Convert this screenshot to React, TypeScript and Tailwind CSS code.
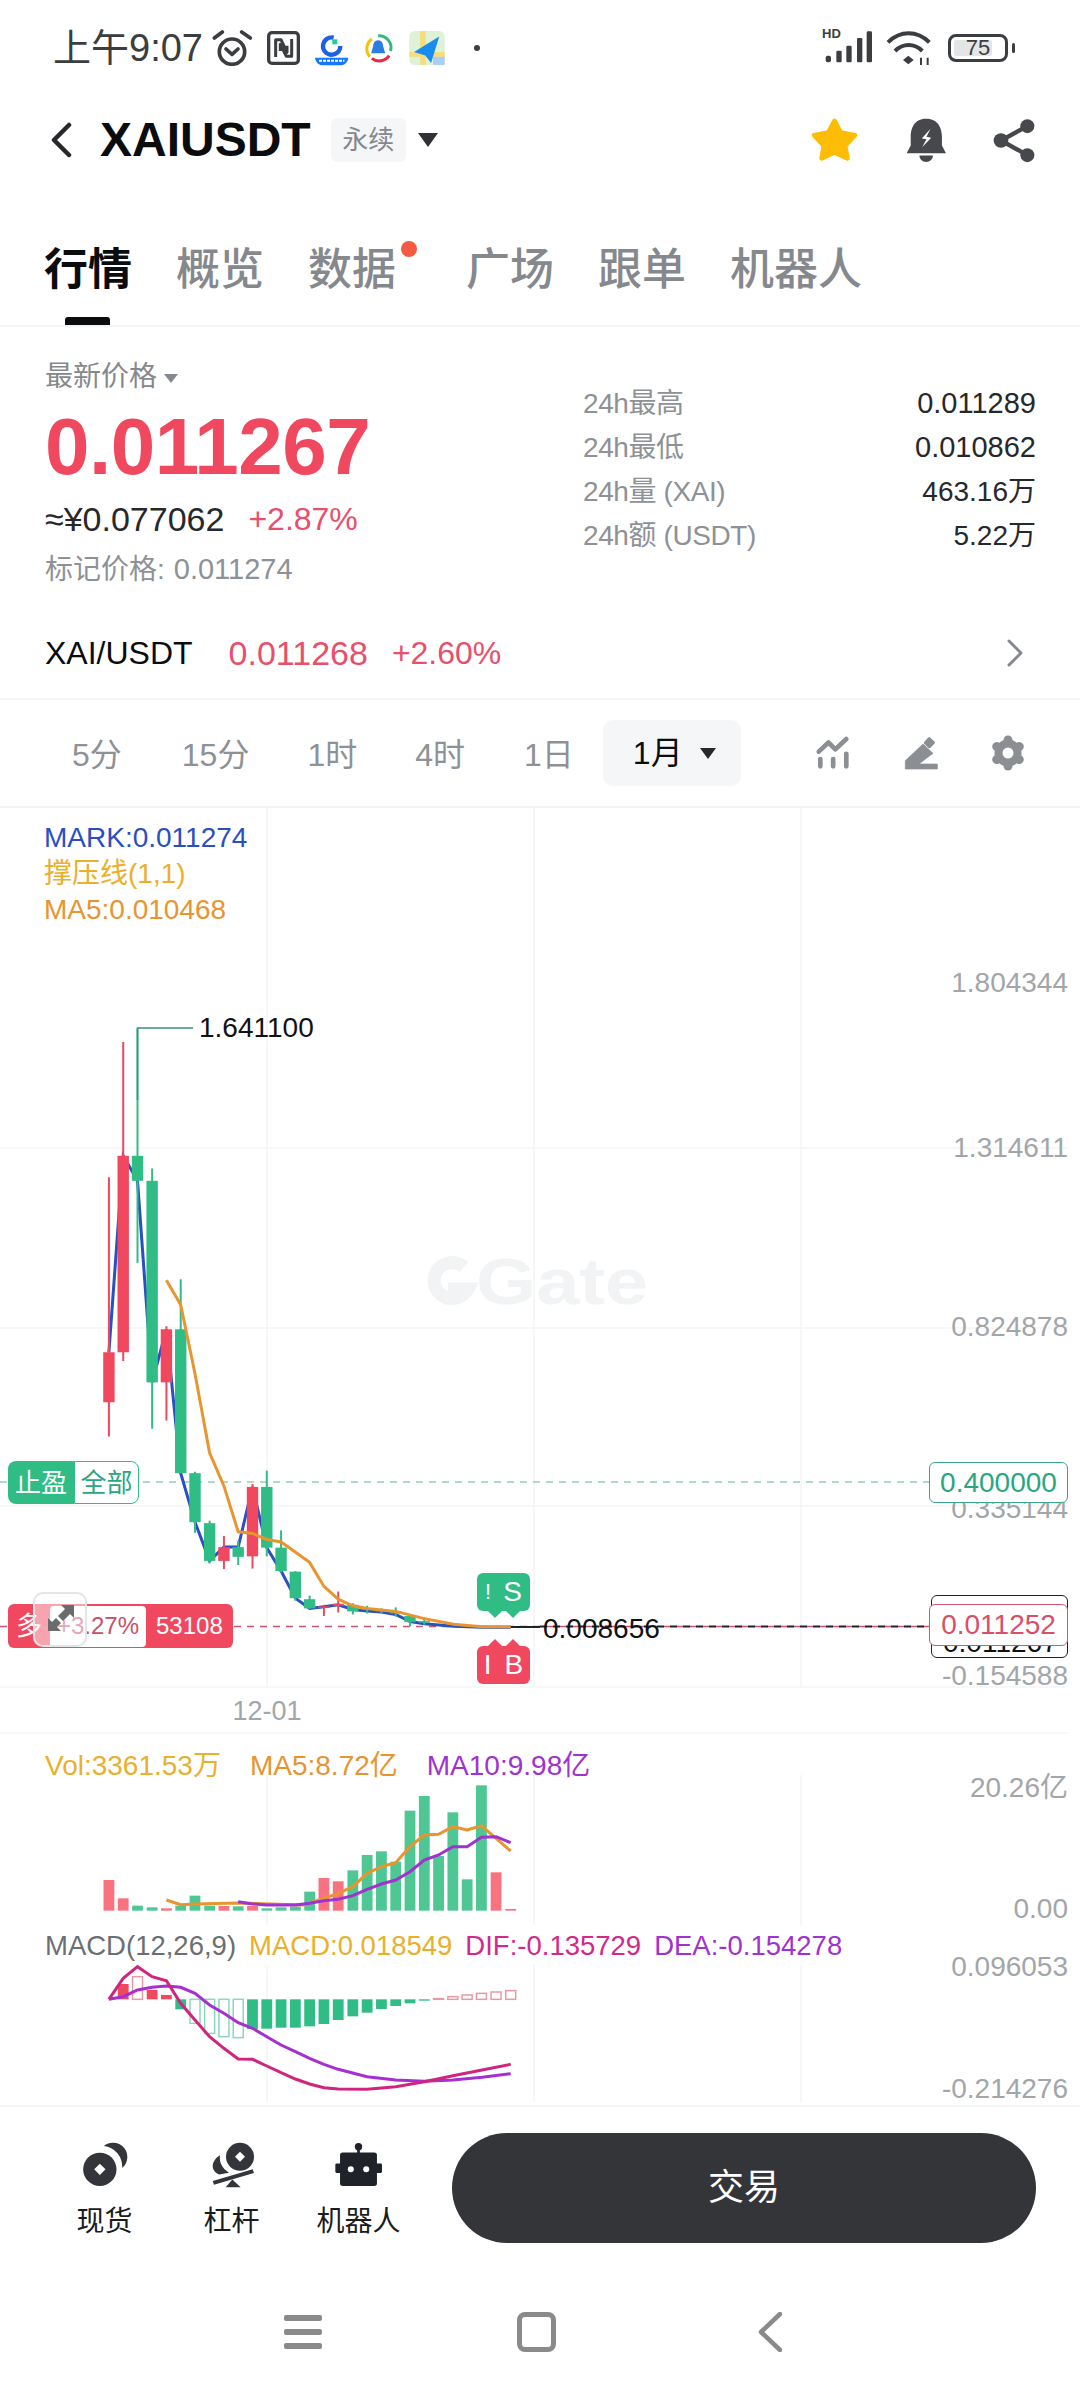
import React from 'react';

const RED = '#f0485f';
const GREEN = '#2fbd85';
const VOL_RED = '#f9727f';
const VOL_GREEN = '#4fc795';

// chart data is read off the reference: main panel and sub panels have their own scale
const X = (z: number) => z / 2.8;
const Y = (z: number) => 940 + z / 1.96;
const SY = (z: number) => 1730 + z / 3;

type Candle = [number, number, number, number, number, 'r' | 'g'];

const candles: Candle[] = [
    [305, 465, 973, 808, 906, 'r'],
    [345, 200, 825, 423, 808, 'r'],
    [385, 173, 633, 423, 472, 'g'],
    [426, 448, 958, 472, 867, 'g'],
    [466, 757, 942, 763, 867, 'r'],
    [506, 665, 1045, 763, 1045, 'g'],
    [546, 1042, 1162, 1045, 1141, 'g'],
    [587, 1138, 1222, 1143, 1217, 'g'],
    [627, 1168, 1233, 1190, 1217, 'r'],
    [667, 1178, 1225, 1190, 1209, 'g'],
    [707, 1066, 1232, 1072, 1208, 'r'],
    [747, 1040, 1208, 1072, 1191, 'g'],
    [787, 1157, 1240, 1191, 1237, 'g'],
    [827, 1237, 1295, 1238, 1290, 'g'],
    [867, 1285, 1311, 1292, 1310, 'g'],
    [907, 1303, 1325, 1306, 1309, 'r'],
    [947, 1277, 1318, 1301, 1305, 'r'],
    [988, 1300, 1322, 1303, 1316, 'g'],
    [1028, 1305, 1320, 1310, 1313, 'g'],
    [1068, 1310, 1320, 1312, 1316, 'g'],
    [1108, 1308, 1326, 1316, 1320, 'g'],
    [1148, 1322, 1345, 1325, 1337, 'g'],
    [1188, 1328, 1342, 1335, 1338, 'g'],
];

const markLine = [[305, 808], [345, 423], [385, 472], [426, 867], [466, 763], [506, 1045], [546, 1141], [587, 1217], [627, 1190], [667, 1190], [707, 1072], [747, 1191], [787, 1237], [827, 1290], [867, 1310], [907, 1307], [947, 1303], [988, 1312], [1028, 1315], [1068, 1317], [1108, 1322], [1148, 1336], [1188, 1340], [1270, 1345], [1350, 1347], [1430, 1347]];
const ma5Line = [[466, 667], [506, 715], [546, 850], [587, 1005], [627, 1070], [667, 1160], [707, 1163], [747, 1175], [787, 1180], [867, 1220], [907, 1267], [947, 1292], [988, 1305], [1028, 1310], [1108, 1316], [1188, 1330], [1270, 1341], [1350, 1346], [1430, 1346]];

const volBars: [number, number, 'r' | 'g'][] = [
    [305, 450, 'r'], [345, 505, 'r'], [385, 527, 'g'], [426, 532, 'g'], [466, 535, 'r'], [506, 527, 'g'], [546, 497, 'g'], [587, 527, 'g'],
    [627, 528, 'r'], [667, 529, 'g'], [707, 528, 'r'], [747, 535, 'g'], [787, 532, 'g'], [827, 530, 'g'], [867, 485, 'g'], [907, 444, 'r'],
    [947, 454, 'r'], [988, 421, 'g'], [1028, 375, 'g'], [1068, 364, 'g'], [1108, 395, 'g'], [1148, 242, 'g'], [1188, 198, 'g'], [1228, 378, 'g'],
    [1268, 247, 'g'], [1308, 448, 'g'], [1348, 166, 'g'], [1389, 427, 'r'], [1430, 537, 'r'],
];
const volMa5 = [[466, 510], [506, 524], [546, 522], [667, 519], [850, 525], [907, 505], [947, 490], [988, 470], [1028, 430], [1068, 410], [1108, 398], [1148, 350], [1188, 315], [1228, 313], [1268, 290], [1308, 300], [1348, 287], [1389, 325], [1430, 363]];
const volMa10 = [[667, 515], [707, 522], [747, 525], [827, 525], [867, 520], [907, 512], [947, 508], [988, 497], [1028, 478], [1068, 462], [1108, 450], [1148, 425], [1188, 390], [1228, 375], [1268, 350], [1308, 350], [1348, 322], [1389, 320], [1430, 338]];

// x, end of bar, filled
const macdBars: [number, number, boolean][] = [
    [345, 762, true], [385, 740, false], [426, 780, true], [466, 795, true], [506, 838, true], [546, 880, false], [587, 910, false], [627, 920, false],
    [667, 923, false], [707, 897, true], [747, 896, true], [787, 893, true], [827, 893, true], [867, 889, true], [907, 882, true], [947, 870, true],
    [988, 859, true], [1028, 848, true], [1068, 837, true], [1108, 828, true], [1148, 820, true], [1188, 812, true], [1228, 806, false], [1268, 800, false],
    [1308, 795, false], [1348, 790, false], [1389, 786, false], [1430, 782, false],
];
const difLine = [[305, 808], [345, 745], [385, 710], [426, 740], [466, 752], [506, 820], [546, 870], [587, 920], [627, 955], [667, 987], [707, 988], [747, 1008], [787, 1028], [827, 1047], [867, 1062], [907, 1073], [947, 1077], [1028, 1078], [1108, 1070], [1188, 1055], [1268, 1037], [1350, 1020], [1430, 1003]];
const deaLine = [[305, 808], [345, 800], [385, 780], [426, 772], [466, 768], [506, 772], [546, 790], [587, 825], [627, 850], [667, 878], [707, 895], [747, 920], [787, 945], [827, 965], [867, 985], [907, 1003], [947, 1018], [1028, 1040], [1108, 1050], [1188, 1054], [1268, 1050], [1350, 1042], [1430, 1031]];

const pts = (line: number[][], fy: (z: number) => number) => line.map(([x, y]) => `${X(x).toFixed(1)},${fy(y).toFixed(1)}`).join(' ');

const axisLabels: [string, number][] = [
    ['1.804344', 982], ['1.314611', 1147], ['0.824878', 1326], ['0.335144', 1508], ['-0.154588', 1675],
    ['20.26亿', 1787], ['0.00', 1908], ['0.096053', 1966], ['-0.214276', 2088],
];

const Chart = () => (
    <svg className="absolute inset-0" width={1080} height={1297} viewBox="0 808 1080 1297">
        {[267, 534, 801].map((x) => (
            <g key={x} stroke="#f3f4f5" strokeWidth={1.5}>
                <line x1={x} x2={x} y1={808} y2={1687} />
                <line x1={x} x2={x} y1={1775} y2={1925} />
                <line x1={x} x2={x} y1={1965} y2={2102} />
            </g>
        ))}
        {[1148, 1328, 1506, 1687, 1733].map((y) => (
            <line key={y} x1={0} x2={1068} y1={y} y2={y} stroke="#f3f4f5" strokeWidth={1.5} />
        ))}
        <line x1={0} x2={929} y1={1482} y2={1482} stroke="#5cb59c" strokeWidth={1.2} strokeDasharray="7 6" />
        <line x1={0} x2={929} y1={1626.5} y2={1626.5} stroke="#c9566e" strokeWidth={1.5} strokeDasharray="7 6" />
        <line x1={540} x2={931} y1={1626.5} y2={1626.5} stroke="#222" strokeWidth={2} strokeDasharray="7 6" />
        <line x1={480} x2={540} y1={1627} y2={1627} stroke="#222" strokeWidth={2} />

        {/* watermark */}
        <g fill="none" stroke="#f1f3f4" strokeWidth={13}>
            <path d="M464 1267 A18 18 0 1 0 468 1289 L448 1289" />
        </g>
        <text x={476} y={1304} fontSize={64} fontWeight={700} fill="#f1f3f4" textLength={172} lengthAdjust="spacingAndGlyphs">Gate</text>

        <polyline points={pts(markLine, Y)} fill="none" stroke="#2a4fc0" strokeWidth={3} />
        {candles.map(([x, wt, wb, bt, bb, c]) => {
            const col = c === 'r' ? RED : GREEN;
            return (
                <g key={x}>
                    <line x1={X(x)} x2={X(x)} y1={Y(wt)} y2={Y(wb)} stroke={col} strokeWidth={2} />
                    <rect x={X(x) - 5.7} y={Y(bt)} width={11.4} height={Math.max(Y(bb) - Y(bt), 1.5)} fill={col} />
                </g>
            );
        })}
        <polyline points={pts(ma5Line, Y)} fill="none" stroke="#e8952f" strokeWidth={3} />
        <polyline points={`137.5,1100 137.5,1028 193,1028`} fill="none" stroke="#3f8f77" strokeWidth={1.5} />
        <text x={199} y={1027} fontSize={28} fill="#111" dominantBaseline="central">1.641100</text>
        <text x={543} y={1628} fontSize={28} fill="#111" dominantBaseline="central">0.008656</text>
        <text x={267} y={1711} fontSize={27} fill="#a3a6a9" textAnchor="middle" dominantBaseline="central">12-01</text>

        {volBars.map(([x, top, c]) => (
            <rect key={x} x={X(x) - 5.4} y={SY(top)} width={10.8} height={SY(542) - SY(top)} fill={c === 'r' ? VOL_RED : VOL_GREEN} />
        ))}
        <polyline points={pts(volMa5, SY)} fill="none" stroke="#e8952f" strokeWidth={3} />
        <polyline points={pts(volMa10, SY)} fill="none" stroke="#a032d0" strokeWidth={3} />

        {macdBars.map(([x, end, filled]) => {
            const zero = SY(808);
            const e = SY(end);
            const col = end < 808 ? RED : GREEN;
            const y = Math.min(zero, e);
            const h = Math.abs(e - zero);
            return filled ? (
                <rect key={x} x={X(x) - 5.4} y={y} width={10.8} height={h} fill={col} />
            ) : (
                <rect key={x} x={X(x) - 5} y={y} width={10} height={h} fill="#fff" stroke={end < 808 ? '#e79aa6' : '#8ed6bb'} strokeWidth={1.5} />
            );
        })}
        <polyline points={pts(deaLine, SY)} fill="none" stroke="#a52fd0" strokeWidth={3} />
        <polyline points={pts(difLine, SY)} fill="none" stroke="#d0257f" strokeWidth={3} />

        {axisLabels.map(([t, y]) => (
            <text key={t} x={1068} y={y} fontSize={28} fill="#a3a6a9" textAnchor="end" dominantBaseline="central">{t}</text>
        ))}
    </svg>
);

const StatusIcons = () => (
    <div className="flex items-center ml-[9px] gap-[15px]">
        <svg width={40} height={36} viewBox="30 32 120 108" fill="none" stroke="#3b3d40" strokeWidth={11}>
            <circle cx={90} cy={97} r={38} />
            <path d="M37 56 L61 38 M119 38 L145 56" strokeLinecap="round" />
            <path d="M72 89 L90 105 L108 89" strokeLinecap="round" strokeLinejoin="round" />
        </svg>
        <svg width={33} height={34} viewBox="198 36 99 102" fill="none" stroke="#3b3d40">
            <rect x={203} y={41} width={89} height={92} rx={10} strokeWidth={10} />
            <path d="M224 114 V62 H240 L258 100 V80" strokeWidth={9} strokeLinejoin="round" />
            <path d="M272 60 V112 H256 L238 76 V96" strokeWidth={9} strokeLinejoin="round" />
        </svg>
        <svg width={34} height={36} viewBox="350 32 102 108" fill="none">
            <path d="M406 55 A26 26 0 1 0 426 80" stroke="#1d62e0" strokeWidth={13} />
            <rect x={402} y={60} width={15} height={15} fill="#21c9a5" />
            <path d="M350 115 H450 C448 130 438 138 425 138 H375 C362 138 352 130 350 115Z" fill="#1677ff" />
            <path d="M362 124 H438" stroke="#fff" strokeWidth={6} strokeDasharray="9 3" />
        </svg>
        <svg width={30} height={34} viewBox="505 38 85 102" fill="none">
            <path d="M520 115 A36 36 0 0 1 526 62" stroke="#f2c30d" strokeWidth={9} />
            <path d="M545 52 A36 36 0 0 1 582 98" stroke="#32b97c" strokeWidth={9} />
            <path d="M578 112 A36 36 0 0 1 526 120" stroke="#e5294a" strokeWidth={9} />
            <path d="M545 66 C556 66 560 76 560 84 L566 105 H524 L530 84 C530 76 534 66 545 66Z" fill="#2a7de1" />
        </svg>
        <svg width={36} height={34} viewBox="648 38 104 100">
            <rect x={648} y={38} width={104} height={100} rx={16} fill="#dff1d6" />
            <rect x={680} y={38} width={16} height={100} fill="#f7dc7a" />
            <rect x={648} y={100} width={104} height={14} fill="#f7dc7a" />
            <rect x={718} y={114} width={34} height={24} fill="#a9cdf5" />
            <path d="M736 54 L662 100 L695 110 L712 132 Z" fill="#1a8cf0" />
        </svg>
        <div className="w-[6px] h-[6px] rounded-full bg-[#3b3d40] ml-[14px]" />
    </div>
);

const StatusBar = () => (
    <div className="h-[95px] flex items-center justify-between pl-[53px] pr-[65px] text-[#3b3d40]">
        <div className="flex items-center">
            <span className="text-[38px] leading-none">上午9:07</span>
            <StatusIcons />
        </div>
        <div className="flex items-center">
            <div className="relative w-[50px] h-[38px]">
                <span className="absolute left-[-2px] top-[-2px] text-[13px] font-bold leading-none">HD</span>
                <svg className="absolute inset-0" width={50} height={38} viewBox="40 35 150 114" fill="#3b3d40">
                    <rect x={45} y={115} width={16} height={20} rx={6} />
                    <rect x={77} y={100} width={16} height={35} rx={4} />
                    <rect x={107} y={85} width={16} height={50} rx={4} />
                    <rect x={139} y={62} width={16} height={73} rx={4} />
                    <rect x={168} y={42} width={16} height={93} rx={4} />
                </svg>
            </div>
            <svg className="ml-[12px]" width={46} height={36} viewBox="225 35 138 108" fill="none" stroke="#3b3d40" strokeWidth={12}>
                <path d="M231 72 C268 36 318 36 355 72" />
                <path d="M252 98 C276 74 310 74 334 98" />
                <path d="M292 112 L308 125 L292 138 L276 125Z" fill="#3b3d40" stroke="none" />
                <path d="M330 118 V140 M350 118 V140" strokeWidth={6} />
            </svg>
            <div className="flex items-center ml-[16px]">
                <div className="relative w-[60px] h-[28px] border-[3px] border-[#3b3d40] rounded-[8px] flex items-center justify-center">
                    <div className="absolute left-[3px] top-[3px] bottom-[3px] w-[38px] bg-[#e4e5e6] rounded-[2px]" />
                    <span className="relative text-[22px] leading-none">75</span>
                </div>
                <div className="w-[3px] h-[10px] bg-[#3b3d40] rounded-[2px] ml-[4px]" />
            </div>
        </div>
    </div>
);

const Header = () => (
    <div className="h-[90px] flex items-center pl-[50px] pr-[43px]">
        <svg width={22} height={36} viewBox="0 0 22 36" fill="none" stroke="#26282b" strokeWidth={4.5} strokeLinecap="round" strokeLinejoin="round">
            <path d="M19 3 L4 18 L19 33" />
        </svg>
        <span className="ml-[28px] text-[48px] font-bold leading-none text-[#0b0c0e]">XAIUSDT</span>
        <span className="ml-[20px] w-[75px] h-[44px] flex items-center justify-center rounded-[6px] bg-[#f5f6f7] text-[26px] text-[#85888c]">永续</span>
        <span className="ml-[12px] w-0 h-0 border-x-[10px] border-x-transparent border-t-[14px] border-t-[#2f3134]" />
        <div className="ml-auto flex items-center gap-[44px]">
            <svg width={52} height={48} viewBox="60 20 155 145">
                <path d="M136 35 L155 70 L198 78 L168 110 L175 148 L136 130 L97 148 L104 110 L74 78 L117 70 Z" fill="#fdbc05" stroke="#fdbc05" strokeWidth={14} strokeLinejoin="round" />
            </svg>
            <svg width={43} height={47} viewBox="340 20 128 140" fill="#46484c">
                <path d="M403 25 C440 25 450 55 450 80 V105 L462 128 H345 L357 105 V80 C357 55 366 25 403 25Z" />
                <path d="M383 135 H423 C423 160 383 160 383 135Z" />
                <path d="M416 55 L390 84 L404 86 L391 110 L418 82 L404 79 Z" fill="#fff" />
            </svg>
            <svg width={45} height={47} viewBox="605 20 135 140" fill="#46484c">
                <path d="M711 47 L632 90 L711 134" fill="none" stroke="#46484c" strokeWidth={13} />
                <circle cx={711} cy={47} r={21} />
                <circle cx={632} cy={90} r={22} />
                <circle cx={711} cy={134} r={21} />
            </svg>
        </div>
    </div>
);

const Tabs = () => (
    <div className="relative h-[142px] pl-[44px] flex items-center gap-[44px] pt-[30px] border-b-2 border-[#f3f4f5] text-[44px] font-medium leading-none text-[#85888c]">
        <span className="text-[#0b0c0e] font-bold">行情</span>
        <span>概览</span>
        <span className="relative mr-[26px]">
            数据
            <span className="absolute right-[-21px] top-[-7px] w-[16px] h-[16px] rounded-full bg-[#f25a43]" />
        </span>
        <span>广场</span>
        <span>跟单</span>
        <span>机器人</span>
        <div className="absolute left-[65px] bottom-0 w-[45px] h-[8px] rounded-t-[3px] bg-[#0b0c0e]" />
    </div>
);

const PriceStats = () => (
    <div className="w-[453px] pt-[55px] ml-auto mr-[44px]">
        {[
            ['24h最高', '0.011289', 'text-[29px]'],
            ['24h最低', '0.010862', 'text-[29px]'],
            ['24h量 (XAI)', '463.16万', 'text-[28px]'],
            ['24h额 (USDT)', '5.22万', 'text-[28px]'],
        ].map(([k, v, size]) => (
            <div key={k} className="h-[44px] flex items-center justify-between">
                <span className="text-[28px] tracking-[-0.4px] text-[#8e9195]">{k}</span>
                <span className={`${size} text-[#26282b]`}>{v}</span>
            </div>
        ))}
    </div>
);

const PriceBlock = () => (
    <div className="h-[283px] flex">
        <div className="pl-[45px] pt-[32px]">
            <div className="h-[36px] flex items-center text-[28px] text-[#85888c]">
                最新价格
                <span className="ml-[7px] mt-[2px] w-0 h-0 border-x-[7px] border-x-transparent border-t-[9px] border-t-[#85888c]" />
            </div>
            <div className="mt-[12px] h-[80px] flex items-center text-[80px] font-bold tracking-[-0.5px] text-[#f0485f]">0.011267</div>
            <div className="mt-[12px] h-[40px] flex items-center">
                <span className="text-[34px] text-[#26282b]">≈¥0.077062</span>
                <span className="ml-[24px] text-[32px] text-[#e84f6c]">+2.87%</span>
            </div>
            <div className="mt-[13px] h-[36px] flex items-center text-[28px] text-[#8e9195]">
                标记价格:<span className="ml-[9px] text-[29px]">0.011274</span>
            </div>
        </div>
        <PriceStats />
    </div>
);

const PairRow = () => (
    <div className="h-[90px] pb-[2px] flex items-center pl-[45px] pr-[56px] border-b-2 border-[#f3f4f5] text-[32px]">
        <span className="text-[#0b0c0e]">XAI/USDT</span>
        <span className="ml-[36px] text-[34px] text-[#e84f6c]">0.011268</span>
        <span className="ml-[24px] text-[#e84f6c]">+2.60%</span>
        <svg className="ml-auto" width={18} height={28} viewBox="0 0 18 28" fill="none" stroke="#85888c" strokeWidth={3} strokeLinecap="round" strokeLinejoin="round">
            <path d="M3 2 L15 14 L3 26" />
        </svg>
    </div>
);

const gearBumps = [0, 60, 120, 180, 240, 300];

const Timeframes = () => (
    <div className="h-[108px] flex items-center pl-[72px] pr-[55px] gap-[58px] border-b-2 border-[#f3f4f5] text-[32px] text-[#8e9195]">
        <span className="mr-[2px] pt-[3px]">5分</span>
        <span className="pt-[3px]">15分</span>
        <span className="pt-[3px]">1时</span>
        <span className="pt-[3px]">4时</span>
        <span className="pt-[3px] ml-[1px]">1日</span>
        <div className="ml-[-29px] w-[138px] h-[66px] rounded-[10px] bg-[#f5f6f7] flex items-center pl-[30px] text-[#0b0c0e]">
            1月
            <span className="ml-[17px] w-0 h-0 border-x-[8px] border-x-transparent border-t-[11px] border-t-[#26282b]" />
        </div>
        <div className="ml-auto flex items-center gap-[52px]">
            <svg width={36} height={36} viewBox="100 105 115 115" fill="none" stroke="#8b8e92" strokeWidth={15} strokeLinecap="round" strokeLinejoin="round">
                <path d="M112 158 L143 129 L165 151 L200 118" />
                <path d="M117 182 V205 M158 182 V205 M200 165 V205" />
            </svg>
            <svg width={36} height={36} viewBox="365 108 108 108" fill="#8b8e92">
                <path d="M372 185 L425 135 L455 163 L413 195 H468 V210 H372 Z" stroke="#8b8e92" strokeWidth={2} strokeLinejoin="round" />
                <rect x={431} y={118} width={26} height={26} rx={4} transform="rotate(43 444 131)" />
            </svg>
            <svg width={34} height={36} viewBox="0 0 34 36" fill="#8b8e92">
                <circle cx={17} cy={18} r={13.5} />
                {gearBumps.map((a) => (
                    <circle key={a} cx={17} cy={18 - 13} r={4.5} transform={`rotate(${a} 17 18)`} />
                ))}
                <circle cx={17} cy={18} r={5.5} fill="#fff" />
            </svg>
        </div>
    </div>
);

const TradeTags = () => (
    <>
        {/* take profit */}
        <div className="absolute left-[8px] top-[653px] w-[131px] h-[43px] flex text-[26px] leading-none">
            <div className="w-[66px] rounded-l-[8px] bg-[#2fbd85] text-white flex items-center justify-center">止盈</div>
            <div className="flex-1 rounded-r-[8px] border border-[#2fbd85] bg-white text-[#2aa680] flex items-center justify-center">全部</div>
        </div>
        {/* position */}
        <div className="absolute left-[8px] top-[796px] w-[225px] h-[44px] rounded-[6px] bg-[#f0485f] flex items-center text-[24px] leading-none text-white">
            <span className="w-[42px] text-center text-[26px]">多</span>
            <div className="w-[96px] h-[41px] rounded-[4px] bg-white text-[#c94f68] flex items-center justify-center">+3.27%</div>
            <span className="ml-[10px]">53108</span>
        </div>
        <div className="absolute left-[33px] top-[784px] w-[54px] h-[55px] rounded-[10px] border-2 border-[#e4e5e6] bg-white/50">
            <svg className="absolute left-[12px] top-[10px]" width={28} height={28} viewBox="0 0 28 28" fill="#6a6b6c">
                <path d="M27 1 H14 L18 5 L11 12 L16 17 L23 10 L27 14 Z" />
                <path d="M1 27 V14 L5 18 L9 14 L14 19 L10 23 L14 27 Z" />
            </svg>
        </div>
        {/* order marks */}
        <div className="absolute left-[477px] top-[765px] w-[53px] h-[38px] rounded-[6px] bg-[#2fbd85] flex items-center justify-center gap-[12px] text-[28px] leading-none text-white">
            <span className="text-[22px]">!</span>
            <span>S</span>
            <span className="absolute left-[13px] bottom-[-5px] w-[10px] h-[10px] rotate-45 bg-[#2fbd85]" />
            <span className="absolute left-[31px] bottom-[-5px] w-[10px] h-[10px] rotate-45 bg-[#2fbd85]" />
        </div>
        <div className="absolute left-[477px] top-[838px] w-[53px] h-[38px] rounded-[6px] bg-[#f0485f] flex items-center justify-center gap-[13px] text-[28px] leading-none text-white">
            <span className="font-light">I</span>
            <span>B</span>
            <span className="absolute left-[13px] top-[-5px] w-[10px] h-[10px] rotate-45 bg-[#f0485f]" />
            <span className="absolute left-[31px] top-[-5px] w-[10px] h-[10px] rotate-45 bg-[#f0485f]" />
        </div>
        {/* price boxes on the axis */}
        <div className="absolute left-[929px] top-[654px] w-[139px] h-[41px] rounded-[6px] border border-[#3aa886] bg-white text-[28px] leading-none text-[#2aa680] flex items-center justify-center">0.400000</div>
        <div className="absolute left-[931px] top-[787px] w-[137px] h-[63px] rounded-[6px] border border-[#222] bg-white overflow-hidden">
            <span className="absolute left-[11px] top-[33px] text-[28px] leading-none text-[#111]">0.011267</span>
        </div>
        <div className="absolute left-[929px] top-[796px] w-[139px] h-[42px] rounded-[6px] border border-[#d8566f] bg-white text-[28px] leading-none text-[#d94f6a] flex items-center justify-center">0.011252</div>
    </>
);

const ChartPanel = () => (
    <div className="relative h-[1297px] text-[28px] leading-[36px]">
        <Chart />
        <div className="relative pl-[44px] pt-[12px]">
            <div className="text-[#2a4fc0]">MARK:0.011274</div>
            <div className="text-[#eab02b]">撑压线(1,1)</div>
            <div className="text-[#e8952f]">MA5:0.010468</div>
        </div>
        <div className="absolute left-[45px] top-[940px] flex gap-[29px]">
            <span className="text-[#eab02b]">Vol:3361.53万</span>
            <span className="text-[#e8952f]">MA5:8.72亿</span>
            <span className="text-[#a032d0]">MA10:9.98亿</span>
        </div>
        <div className="absolute left-[45px] top-[1120px] flex gap-[13px] text-[27.5px]">
            <span className="text-[#6b6f73]">MACD(12,26,9)</span>
            <span className="text-[#eab02b]">MACD:0.018549</span>
            <span className="text-[#cf2a8c]">DIF:-0.135729</span>
            <span className="text-[#a032d0]">DEA:-0.154278</span>
        </div>
        <TradeTags />
    </div>
);

const BottomAction = ({ label, children }: { label: string; children: React.ReactNode }) => (
    <div className="w-[127px] flex flex-col items-center">
        <div className="h-[50px] flex items-center justify-center">{children}</div>
        <span className="mt-[19px] text-[28px] leading-none text-[#1a1b1d]">{label}</span>
    </div>
);

const BottomBar = () => (
    <div className="h-[165px] flex items-start border-t-2 border-[#f3f4f5] pl-[41px] pr-[44px]">
        <div className="flex pt-[32px]">
            <BottomAction label="现货">
                <svg width={46} height={45} viewBox="65 30 137 135" fill="#33353a">
                    <path d="M130 42 A42 42 0 0 1 185 108 A62 62 0 0 0 130 42Z" />
                    <circle cx={118} cy={112} r={50} />
                    <path d="M118 95 L135 112 L118 129 L101 112Z" fill="#fff" />
                </svg>
            </BottomAction>
            <BottomAction label="杠杆">
                <svg width={46} height={47} viewBox="445 30 138 140" fill="#33353a">
                    <circle cx={538} cy={77} r={42} />
                    <path d="M538 62 L553 77 L538 92 L523 77Z" fill="#fff" />
                    <path d="M478 72 C455 85 445 115 475 130 L505 125 C485 110 475 95 478 72Z" />
                    <path d="M458 155 L578 120" stroke="#33353a" strokeWidth={12} />
                    <path d="M515 145 L540 168 H495Z" />
                </svg>
            </BottomAction>
            <BottomAction label="机器人">
                <svg width={49} height={45} viewBox="822 26 146 134" fill="#1f2229">
                    <circle cx={895} cy={40} r={11} />
                    <rect x={891} y={40} width={8} height={20} />
                    <rect x={840} y={57} width={110} height={100} rx={8} />
                    <rect x={826} y={90} width={139} height={28} rx={4} />
                    <circle cx={872} cy={107} r={9} fill="#fff" />
                    <circle cx={918} cy={107} r={9} fill="#fff" />
                </svg>
            </BottomAction>
        </div>
        <button className="ml-auto mt-[26px] w-[584px] h-[110px] rounded-[55px] bg-[#333538] text-[36px] text-white">交易</button>
    </div>
);

const NavBar = () => (
    <div className="relative h-[130px] flex items-start pt-[42px] pl-[284px]">
        <div className="w-[38px] h-[40px] flex flex-col justify-between py-[3px]">
            <div className="h-[6px] rounded-[2px] bg-[#8a8a8a]" />
            <div className="h-[6px] rounded-[2px] bg-[#8a8a8a]" />
            <div className="h-[6px] rounded-[2px] bg-[#8a8a8a]" />
        </div>
        <div className="ml-[195px] w-[39px] h-[40px] rounded-[8px] border-[5px] border-[#8a8a8a]" />
        <svg className="ml-[202px]" width={24} height={40} viewBox="0 0 24 40" fill="none" stroke="#8a8a8a" strokeWidth={4.5} strokeLinecap="round" strokeLinejoin="round">
            <path d="M22 2 L3 20 L22 38" />
        </svg>
    </div>
);

export default function App() {
    return (
        <div className="w-[1080px] h-[2400px] bg-white overflow-hidden font-['Liberation_Sans','Noto_Sans_CJK_SC',sans-serif]">
            <StatusBar />
            <Header />
            <Tabs />
            <PriceBlock />
            <PairRow />
            <Timeframes />
            <ChartPanel />
            <BottomBar />
            <NavBar />
        </div>
    );
}
